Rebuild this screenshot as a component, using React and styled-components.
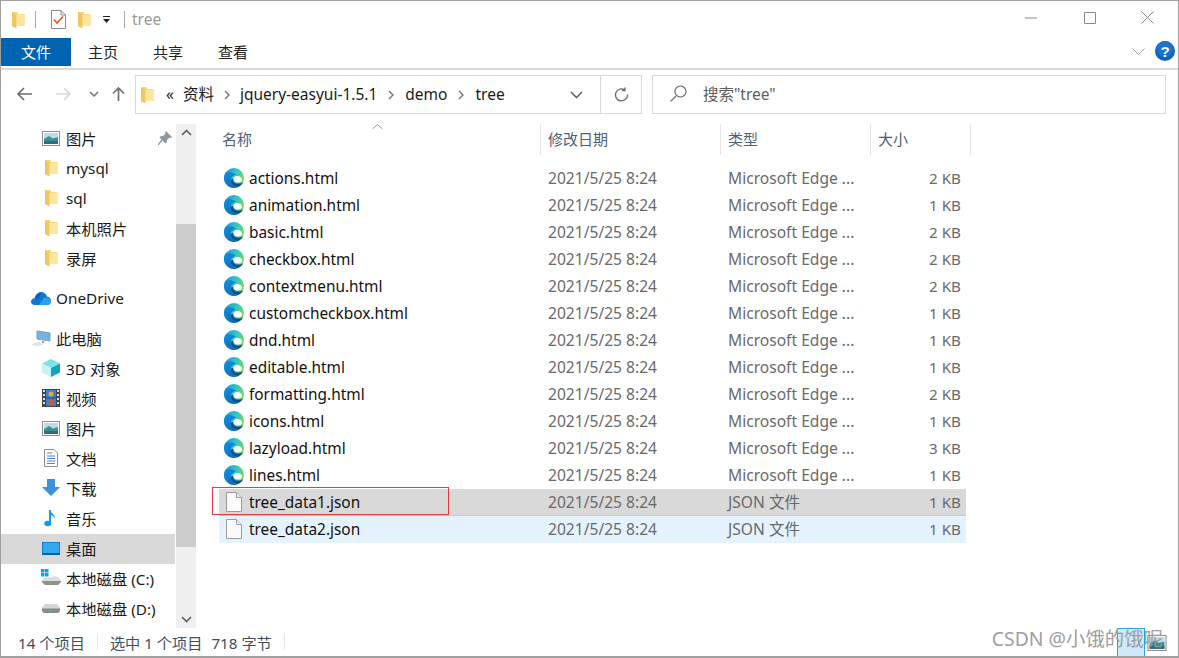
import React from "react";
import styled, { createGlobalStyle } from "styled-components";

const Global = createGlobalStyle`
  html, body { margin: 0; padding: 0; background: #fff; }
  * { box-sizing: border-box; }
  #root { width: 1179px; height: 658px; overflow: hidden; }
`;

const Win = styled.div`
  position: relative;
  width: 1179px; height: 658px;
  display: flex; flex-direction: column;
  border: 1px solid #a0a0a0;
  border-bottom-width: 2px;
  background: #fff;
  font-family: "Noto Sans", "Noto Sans CJK SC", sans-serif;
  font-size: 15px;
  color: #1a1a1a;
  overflow: hidden;
`;
const TitleBar = styled.div`
  height: 37px; display: flex; align-items: center; padding-left: 11px; flex: none;
`;
const QuickSep = styled.span`
  width: 1px; height: 17px; background: #a8a8a8; flex: none; margin: 0 ${p => p.$r}px 0 ${p => p.$l}px;
`;
const Spacer = styled.span`
  width: ${p => p.$w}px; flex: none;
`;
const TitleText = styled.span`
  color: #9a9a9a; font-size: 15.5px; line-height: 20px; padding-bottom: 2px;
`;
const WinBtns = styled.div`
  margin-left: auto; display: flex; align-items: center; margin-top: -4px; padding-right: 24px; gap: 45.5px;
`;
const TabBar = styled.div`
  height: 32px; flex: none; display: flex; align-items: flex-start;
  border-bottom: 2px solid #dadada; position: relative;
`;
const FileTab = styled.div`
  width: 70px; height: 28px; background: #0063b1; color: #fff; padding-bottom: 2px;
  display: flex; align-items: center; justify-content: center; font-size: 15px;
`;
const Tab = styled.div`
  width: 65px; height: 28px; display: flex; align-items: center; justify-content: center; font-size: 15px; color: #222;
  padding: 0 1px 2px 0;
`;
const TabTools = styled.div`
  margin-left: auto; height: 28px; display: flex; align-items: center; gap: 10px; padding-right: 3px; margin-top: -1px;
`;
const AddressRow = styled.div`
  height: 54px; flex: none; display: flex; align-items: flex-start; padding: 5px 12px 0 0;
`;
const NavButtons = styled.div`
  width: 134px; height: 38px; display: flex; align-items: center; flex: none; padding-left: 15px;
`;
const AddressBox = styled.div`
  width: 507px; height: 39px; border: 1px solid #d9d9d9; display: flex; align-items: center; flex: none;
  padding-left: 5px; color: #1a1a1a;
`;
const Crumb = styled.span`
  margin-left: ${p => p.$ml}px; font-size: 15.5px; white-space: nowrap; line-height: 20px; padding-bottom: 2px;
`;
const AddrEnd = styled.div`
  margin-left: auto; display: flex; align-items: center; height: 100%;
`;
const Divider = styled.span`
  width: 1px; height: 100%; background: #d9d9d9; margin: 0 13px 0 17px;
`;
const SearchBox = styled.div`
  margin-left: 10px; width: 515px; height: 39px; border: 1px solid #d9d9d9; display: flex; align-items: center;
  padding: 0 0 2px 17px; color: #5f5f5f; gap: 16px; font-size: 15.5px;
`;
const Main = styled.div`
  flex: 1; min-height: 0; display: flex;
`;
const Side = styled.div`
  width: 174px; flex: none; display: flex; flex-direction: column;
`;
const SideRow = styled.div`
  height: 30px; flex: none; display: flex; align-items: center; position: relative;
  padding: 0 0 2px ${p => p.$pad}px; margin-top: ${p => p.$mt || 0}px; gap: ${p => p.$gap}px;
  background: ${p => p.$sel ? "#d9d9d9" : "transparent"}; white-space: nowrap; font-size: 15.3px;
  svg { flex: none; }
`;
const Pin = styled.span`
  position: absolute; right: 3px; top: 7px; display: flex;
`;
const IconSlot = styled.span`
  width: 20px; height: 20px; display: flex; align-items: center; justify-content: center; flex: none;
`;
const Scroll = styled.div`
  width: 20px; flex: none; margin-left: 1px; background: #f0f0f0; display: flex; flex-direction: column;
  align-items: center; justify-content: space-between; height: 504px; position: relative;
`;
const Thumb = styled.div`
  position: absolute; left: 0; right: 0; top: 100px; height: 323px; background: #cdcdcd;
`;
const ScrollBtn = styled.span`
  height: 17px; display: flex; align-items: center; justify-content: center; z-index: 1;
`;
const List = styled.div`
  flex: 1; padding-left: 23px; min-width: 0;
`;
const Header = styled.div`
  display: grid; grid-template-columns: 322px 180px 150px 100px; height: 31px; position: relative; color: #4c607a;
  font-size: 15px; margin-bottom: 10px;
`;
const Caret = styled.span`
  position: absolute; left: 153px; top: 0; display: flex;
`;
const HeadCell = styled.div`
  border-right: 1px solid #e5e5e5; display: flex; align-items: center; padding: 0 0 2px ${p => p.$pl}px;
`;
const Row = styled.div`
  width: 747px; height: 27px; display: grid; grid-template-columns: 321px 180px 150px 96px; align-items: center;
  background: ${p => p.$bg || "transparent"}; padding-bottom: 2px;
  ${p => p.$sep ? "box-shadow: inset 0 -1px 0 #c8c8c8;" : ""}
  color: #6a6a6a; white-space: nowrap;
`;
const NameCell = styled.div`
  display: flex; align-items: center; gap: 5px; padding-left: 5px; color: #111; font-size: 15.4px;
`;
const NameText = styled.span`
  padding-top: 2px;
`;
const Cell = styled.div`
  padding-left: 8px; font-size: 15.6px; overflow: hidden;
`;
const SizeCell = styled.div`
  text-align: right; padding-right: 5px; font-size: 15.2px;
`;
const Status = styled.div`
  height: 27px; flex: none; display: flex; align-items: center; padding: 0 0 2px 17px; font-size: 15.2px; color: #3f4d5c; white-space: nowrap;
`;
const StatusSep = styled.span`
  width: 1px; height: 17px; background: #e8e8e8; margin: 0 ${p => p.$r}px 0 ${p => p.$l}px;
`;
const StatusText = styled.span`
  margin-left: ${p => p.$ml || 0}px;
`;
const RedBox = styled.div`
  position: absolute; left: 211px; top: 486px; width: 237px; height: 28px; border: 1px solid #ee3a3a;
`;
const Watermark = styled.div`
  position: absolute; right: 15px; bottom: 4px; font-size: 19.4px; color: #9a9a9a; white-space: nowrap; opacity: .95;
`;
const Thumbnail = styled.div`
  position: absolute; left: 1116px; top: 627px; width: 28px; height: 29px; background: rgba(190,225,245,.75); border: 1px solid #2ea3e0;
`;
const MiniPic = styled.span`
  position: absolute; left: 1146px; top: 634px; display: flex;
`;

const Folder = ({ w = 13, h = 18 }) => (
  <svg width={w} height={h} viewBox="0 0 13 18">
    <path d="M0 1 L5.500 1 L6 3 L12.500 3 L12.500 15 L0 15Z" fill="#f5d472" />
    <path d="M0 1.200 L4.500 3.600 L4.500 17.600 L0 15.200Z" fill="#efc75e" />
    <path d="M4.500 3.600 H12.500 V15 H4.500Z" fill="#ffe69c" />
  </svg>
);
const Check = () => (
  <svg width="15" height="19" viewBox="0 0 15 19">
    <path d="M.5.5H10L14.500 5V18.500H.5Z" fill="#fff" stroke="#8a8a8a" />
    <path d="M10 .5V5H14.500" fill="none" stroke="#8a8a8a" />
    <path d="M3 9.500L6 13L12 6.500" fill="none" stroke="#e2552a" strokeWidth="1.600" />
  </svg>
);
const Drop = () => (
  <svg width="9" height="8" viewBox="0 0 9 8"><path d="M1 0.500H8" stroke="#222" /><path d="M1 3H8L4.500 7Z" fill="#222" /></svg>
);
const Line = ({ d, w, h, c = "#777", sw = 1 }) => (
  <svg width={w} height={h} viewBox={`0 0 ${w} ${h}`}><path d={d} fill="none" stroke={c} strokeWidth={sw} /></svg>
);
const Arrow = ({ dir, c }) => {
  const ds = { l: "M16 8H2M8 2L2 8L8 14", r: "M0 8H14M8 2L14 8L8 14" };
  return <Line d={ds[dir]} w={16} h={16} c={c} sw={1.7} />;
};
const Sep = () => <Line d="M1 1L5 5L1 9" w={7} h={10} c="#6f6f6f" sw={1.3} />;

const Edge = () => (
  <svg width="20" height="20" viewBox="0 0 20 20">
    <defs>
      <linearGradient id="eg" x1="0.1" y1="0.1" x2="1" y2="0.6"><stop offset="0" stopColor="#1a9fd0" /><stop offset=".5" stopColor="#35c8c0" /><stop offset="1" stopColor="#7ddc50" /></linearGradient>
      <linearGradient id="eb" x1="0" y1="0" x2="0.5" y2="1"><stop offset="0" stopColor="#1191e0" /><stop offset="1" stopColor="#0d6cc0" /></linearGradient>
    </defs>
    <circle cx="10" cy="10" r="10" fill="url(#eg)" />
    <path d="M1.500 4.700C.5 6.200 0 8 0 10C0 15.500 4.500 20 10 20C11.500 20 13 19.700 14.300 19C10 19 6.500 16 6.500 12.500C6.500 9.500 9 7 12 7C10 4.500 4.500 3 1.500 4.700Z" fill="url(#eb)" />
    <path d="M9.200 11.500C9.400 9.400 10.800 8 12.800 8C15.500 8 18 9.500 18 11.500C18 13.500 16 14.500 14 14.500C11.800 14.500 9.800 13.500 9.200 11.500Z" fill="#fff" />
    <path d="M6.500 12.500C6.500 16 10 19 14.300 19C16.500 18 18.300 16.300 19.300 14C17.500 15.500 14 16 11.500 15.200C9.800 14.600 9 13 9.200 11C7.500 11 6.500 11.500 6.500 12.500Z" fill="#0b4f96" />
  </svg>
);
const Doc = () => (
  <IconSlot>
    <svg width="16" height="20" viewBox="0 0 16 20">
      <path d="M.5.5H10.500L15.500 5.500V19.500H.5Z" fill="#fbfbfb" stroke="#9a9a9a" />
      <path d="M10.500.5V5.500H15.500" fill="#eee" stroke="#9a9a9a" />
    </svg>
  </IconSlot>
);
const Pic = ({ w = 18, h = 15 }) => (
  <svg width={w} height={h} viewBox="0 0 18 15">
    <rect x=".5" y=".5" width="17" height="14" fill="#fff" stroke="#8e8e8e" />
    <rect x="2" y="2" width="14" height="6" fill="#bcdcee" />
    <path d="M2 8L7 5L11 7.500L16 6V13H2Z" fill="#3f8f90" />
    <rect x="2" y="10" width="14" height="3" fill="#2d6e7e" />
  </svg>
);
const Cube = () => (
  <svg width="18" height="18" viewBox="0 0 18 18">
    <path d="M9 0L18 4.500L9 9L0 4.500Z" fill="#7de3ea" />
    <path d="M0 4.500L9 9V18L0 13.500Z" fill="#c6f2f4" />
    <path d="M18 4.500L9 9V18L18 13.500Z" fill="#11a4bb" />
  </svg>
);
const Film = () => (
  <svg width="18" height="18" viewBox="0 0 18 18">
    <rect width="18" height="18" fill="#444" />
    <rect x="4" y="1" width="10" height="7.500" fill="#3a7fd0" />
    <rect x="4" y="9.500" width="10" height="7.500" fill="#3a7fd0" />
    <circle cx="9" cy="5" r="2.500" fill="#e8a92c" /><circle cx="9" cy="13.500" r="2.500" fill="#d8592c" />
    {[1, 5, 9, 13].map(y => <g key={y}><rect x="1" y={y} width="2" height="2" fill="#ddd" /><rect x="15" y={y} width="2" height="2" fill="#ddd" /></g>)}
  </svg>
);
const DocIcon = () => (
  <svg width="14" height="18" viewBox="0 0 14 18">
    <path d="M.5.5H10L13.500 4V17.500H.5Z" fill="#fff" stroke="#8e8e8e" />
    <path d="M3 4H8M3 7H11M3 9.500H11M3 12H11M3 14.500H11" stroke="#4a87b8" />
  </svg>
);
const Download = () => (
  <svg width="18" height="18" viewBox="0 0 18 18"><path d="M5 0H13V8H18L9 17L0 8H5Z" fill="#3e8fdc" /></svg>
);
const Note = () => (
  <svg width="14" height="18" viewBox="0 0 14 18">
    <path d="M6 1V14" stroke="#0e9bec" strokeWidth="2" />
    <ellipse cx="3.800" cy="14.500" rx="3.500" ry="2.800" fill="#0e9bec" />
    <path d="M6 1C7 5 12 5 10.500 10C10.500 7 8 6.500 6 5.500Z" fill="#0e9bec" />
  </svg>
);
const Desktop = () => (
  <svg width="18" height="13" viewBox="0 0 18 13">
    <rect width="18" height="13" fill="#0f80d8" />
    <rect x="1" y="1" width="16" height="10" fill="#35a8ee" />
    <rect y="11" width="18" height="2" fill="#0a5fa8" />
  </svg>
);
const Drive = () => (
  <svg width="18" height="9" viewBox="0 0 18 9">
    <path d="M3 0H15L18 3.500V7L16 9H2L0 7V3.500Z" fill="#d5d5d5" />
    <path d="M0 4.500H18V7L16 9H2L0 7Z" fill="#8a8a8a" />
    <rect x="7" y="6" width="3" height="1.500" fill="#5cc05c" />
  </svg>
);
const WinDrive = () => (
  <svg width="20" height="18" viewBox="0 0 20 18">
    <g fill="#00a8f0"><rect x="0" y="0" width="3.500" height="3.500" /><rect x="4" y="0" width="3.500" height="3.500" /><rect x="0" y="4" width="3.500" height="3.500" /><rect x="4" y="4" width="3.500" height="3.500" /></g>
    <path d="M3 9L15 7L20 11V13L17 16H4L1 13V11Z" fill="#dcdcdc" />
    <path d="M1 12H20V13L17 16H4L1 13Z" fill="#8f8f8f" />
    <rect x="8" y="13" width="3" height="1.500" fill="#5cc05c" />
  </svg>
);
const Cloud = () => (
  <svg width="20" height="13" viewBox="0 0 20 13">
    <path d="M4 13C1.500 13 0 11.500 0 9.500C0 7.500 1.500 6.200 3.500 6.200C4.500 2.500 7 0 10.200 0C12.800 0 15 1.500 16 4.500C18.500 5 20 6.800 20 9C20 11.500 18.500 13 16 13Z" fill="#0f78d4" />
    <path d="M4 6.500C5 3 8 1 11 1.500C9 3 8 5 8 6.500Z" fill="#0a5fb0" />
    <path d="M8 13L13 5.500C15 5 19 6 20 9C20 11.500 18.500 13 16 13Z" fill="#2ca3e8" />
  </svg>
);
const PC = () => (
  <svg width="20" height="17" viewBox="0 0 20 17">
    <path d="M6 1L19 3V11L6 9Z" fill="#6fb6e6" stroke="#8a98a4" />
    <path d="M12 11V13" stroke="#9aa4ac" strokeWidth="2" />
    <path d="M0 14.500L7 12L13 14L6 16.500Z" fill="#e2e2e2" />
  </svg>
);
const PinIcon = () => (
  <svg width="14" height="14" viewBox="0 0 14 14">
    <path d="M8 0L14 6L12.500 7L11.500 6.500L9 9L8.800 11.500L7.500 12.500L1.500 6.500L2.500 5.200L5 5L7.500 2.500L7 1.500Z" fill="#8d97a1" />
    <path d="M4 9L0 14" stroke="#8d97a1" strokeWidth="1.400" />
  </svg>
);
const Help = () => (
  <svg width="20" height="20" viewBox="0 0 20 20">
    <circle cx="10" cy="10" r="10" fill="#0c63bd" />
    <circle cx="10" cy="8" r="8" fill="#1874cf" />
    <text x="10" y="15.500" textAnchor="middle" fontSize="15" fontWeight="700" fill="#fff" fontFamily="Liberation Sans, sans-serif">?</text>
  </svg>
);

const sideTop = [
  { t: "图片", i: <Pic />, pin: true },
  { t: "mysql", i: <Folder /> },
  { t: "sql", i: <Folder /> },
  { t: "本机照片", i: <Folder /> },
  { t: "录屏", i: <Folder /> },
];
const sidePc = [
  { t: "3D 对象", i: <Cube /> },
  { t: "视频", i: <Film /> },
  { t: "图片", i: <Pic /> },
  { t: "文档", i: <DocIcon /> },
  { t: "下载", i: <Download /> },
  { t: "音乐", i: <Note /> },
  { t: "桌面", i: <Desktop />, sel: true },
  { t: "本地磁盘 (C:)", i: <WinDrive /> },
  { t: "本地磁盘 (D:)", i: <Drive /> },
];
const files = [
  ["actions.html", "2 KB"], ["animation.html", "1 KB"], ["basic.html", "2 KB"], ["checkbox.html", "2 KB"],
  ["contextmenu.html", "2 KB"], ["customcheckbox.html", "1 KB"], ["dnd.html", "1 KB"], ["editable.html", "1 KB"],
  ["formatting.html", "2 KB"], ["icons.html", "1 KB"], ["lazyload.html", "3 KB"], ["lines.html", "1 KB"],
];

export default function App() {
  return (
    <Win>
      <Global />
      <TitleBar>
        <Folder />
        <QuickSep $l={10} $r={15} />
        <Check />
        <Spacer $w={12} />
        <Folder />
        <Spacer $w={11} />
        <Drop />
        <QuickSep $l={13} $r={7} />
        <TitleText>tree</TitleText>
        <WinBtns>
          <Line d="M0 6H12" w={13} h={12} c="#8a8a8a" />
          <Line d="M.5.5H11.500V11.500H.5Z" w={12} h={12} c="#8a8a8a" />
          <Line d="M.5.5L12.500 12.500M12.500.5L.5 12.500" w={13} h={13} c="#8a8a8a" />
        </WinBtns>
      </TitleBar>
      <TabBar>
        <FileTab>文件</FileTab>
        <Tab>主页</Tab>
        <Tab>共享</Tab>
        <Tab>查看</Tab>
        <TabTools>
          <Line d="M.5.5L6.500 6.500L12.500.5" w={13} h={7} c="#a0a0a0" />
          <Help />
        </TabTools>
      </TabBar>
      <AddressRow>
        <NavButtons>
          <Arrow dir="l" c="#707070" />
          <Spacer $w={24} />
          <Arrow dir="r" c="#d6d6d6" />
          <Spacer $w={17} />
          <Line d="M1 1L5 5L9 1" w={10} h={7} c="#707070" sw={1.5} />
          <Spacer $w={13} />
          <Line d="M6.500 15V2M1 7.500L6.500 2L12 7.500" w={13} h={16} c="#707070" sw={1.7} />
        </NavButtons>
        <AddressBox>
          <Folder />
          <Crumb $ml={12}>«</Crumb>
          <Crumb $ml={9}>资料</Crumb>
          <Crumb $ml={10}><Sep /></Crumb>
          <Crumb $ml={9}>jquery-easyui-1.5.1</Crumb>
          <Crumb $ml={11}><Sep /></Crumb>
          <Crumb $ml={10}>demo</Crumb>
          <Crumb $ml={11}><Sep /></Crumb>
          <Crumb $ml={10}>tree</Crumb>
          <AddrEnd>
            <Line d="M1 1L6.500 6.500L12 1" w={13} h={8} c="#555" sw={1.4} />
            <Divider />
            <Line d="M13.500 7.500A6 6 0 1 1 11 3M11 .5V3.500H8" w={15} h={15} c="#707070" sw={1.4} />
            <Spacer $w={12} />
          </AddrEnd>
        </AddressBox>
        <SearchBox>
          <Line d="M6 11L.5 16.500M10.500 1A5.500 5.500 0 1 1 10.400 1Z" w={17} h={17} c="#707070" sw={1.2} />
          搜索"tree"
        </SearchBox>
      </AddressRow>
      <Main>
        <Side>
          {sideTop.map((s, i) => (
            <SideRow key={i} $pad={40} $gap={5}>
              <IconSlot>{s.i}</IconSlot>
              {s.t}
              {s.pin && <Pin><PinIcon /></Pin>}
            </SideRow>
          ))}
          <SideRow $pad={30} $gap={5} $mt={10}><IconSlot><Cloud /></IconSlot>OneDrive</SideRow>
          <SideRow $pad={30} $gap={5} $mt={10}><IconSlot><PC /></IconSlot>此电脑</SideRow>
          {sidePc.map((s, i) => (
            <SideRow key={i} $pad={40} $gap={5} $sel={s.sel}>
              <IconSlot>{s.i}</IconSlot>
              {s.t}
            </SideRow>
          ))}
        </Side>
        <Scroll>
          <Thumb />
          <ScrollBtn><Line d="M1 6L5.500 1.500L10 6" w={11} h={7} c="#606060" sw={1.6} /></ScrollBtn>
          <ScrollBtn><Line d="M1 1L5.500 5.500L10 1" w={11} h={7} c="#606060" sw={1.6} /></ScrollBtn>
        </Scroll>
        <List>
          <Header>
            <Caret><Line d="M.5 5L5.500 .5L10.500 5" w={11} h={6} c="#9a9a9a" /></Caret>
            <HeadCell $pl={3}>名称</HeadCell>
            <HeadCell $pl={7}>修改日期</HeadCell>
            <HeadCell $pl={7}>类型</HeadCell>
            <HeadCell $pl={7}>大小</HeadCell>
          </Header>
          {files.map(([n, s]) => (
            <Row key={n}>
              <NameCell><Edge /><NameText>{n}</NameText></NameCell>
              <Cell>2021/5/25 8:24</Cell>
              <Cell>Microsoft Edge ...</Cell>
              <SizeCell>{s}</SizeCell>
            </Row>
          ))}
          <Row $bg="#d9d9d9" $sep>
            <NameCell><Doc /><NameText>tree_data1.json</NameText></NameCell>
            <Cell>2021/5/25 8:24</Cell>
            <Cell>JSON 文件</Cell>
            <SizeCell>1 KB</SizeCell>
          </Row>
          <Row $bg="#e5f3ff">
            <NameCell><Doc /><NameText>tree_data2.json</NameText></NameCell>
            <Cell>2021/5/25 8:24</Cell>
            <Cell>JSON 文件</Cell>
            <SizeCell>1 KB</SizeCell>
          </Row>
        </List>
      </Main>
      <Status>
        14 个项目
        <StatusSep $l={12} $r={12} />
        选中 1 个项目
        <StatusText $ml={9}>718 字节</StatusText>
        <StatusSep $l={12} $r={0} />
      </Status>
      <RedBox />
      <Thumbnail />
      <MiniPic><Pic w={20} h={16} /></MiniPic>
      <Watermark>CSDN @小饿的饿呢</Watermark>
    </Win>
  );
}
